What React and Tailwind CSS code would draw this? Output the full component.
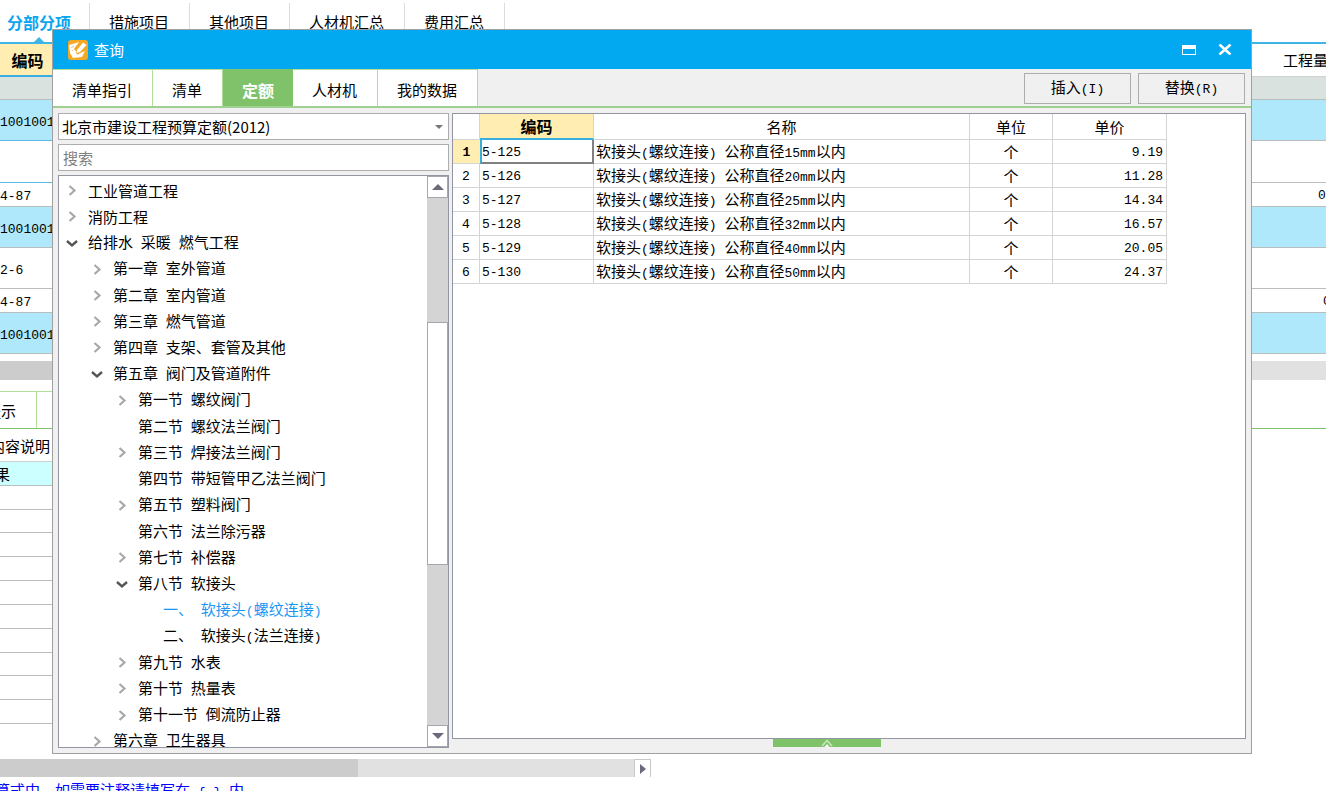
import { useState } from 'react';

const projectTabs = ['分部分项', '措施项目', '其他项目', '人材机汇总', '费用汇总'];
const queryTabs = ['清单指引', '清单', '定额', '人材机', '我的数据'];

const backRows = [
  { h: 'h-[23px]', bg: 'bg-[#d9e2de]', line: 'border-[#b9bdbb]' },
  { h: 'h-[41px]', bg: 'bg-[#aee8fa]', line: 'border-[#5bbbe6]', code: '1001001' },
  { h: 'h-[42px]', bg: 'bg-white', line: 'border-[#5bbbe6]' },
  { h: 'h-[24px]', bg: 'bg-white', line: 'border-[#b9bdbb]', code: '4-87', amount: '0', pad: 'pl-[66px]' },
  { h: 'h-[41px]', bg: 'bg-[#aee8fa]', line: 'border-[#b9bdbb]', code: '1001001' },
  { h: 'h-[41px]', bg: 'bg-white', line: 'border-[#b9bdbb]', code: '2-6' },
  { h: 'h-[24px]', bg: 'bg-white', line: 'border-[#b9bdbb]', code: '4-87', amount: '0', pad: 'pl-[71px]' },
  { h: 'h-[41px]', bg: 'bg-[#aee8fa]', line: 'border-[#b9bdbb]', code: '1001001' },
];

const tree = [
  { level: 0, text: '工业管道工程', state: 'closed' },
  { level: 0, text: '消防工程', state: 'closed' },
  { level: 0, text: '给排水 采暖 燃气工程', state: 'open' },
  { level: 1, text: '第一章 室外管道', state: 'closed' },
  { level: 1, text: '第二章 室内管道', state: 'closed' },
  { level: 1, text: '第三章 燃气管道', state: 'closed' },
  { level: 1, text: '第四章 支架、套管及其他', state: 'closed' },
  { level: 1, text: '第五章 阀门及管道附件', state: 'open' },
  { level: 2, text: '第一节 螺纹阀门', state: 'closed' },
  { level: 2, text: '第二节 螺纹法兰阀门' },
  { level: 2, text: '第三节 焊接法兰阀门', state: 'closed' },
  { level: 2, text: '第四节 带短管甲乙法兰阀门' },
  { level: 2, text: '第五节 塑料阀门', state: 'closed' },
  { level: 2, text: '第六节 法兰除污器' },
  { level: 2, text: '第七节 补偿器', state: 'closed' },
  { level: 2, text: '第八节 软接头', state: 'open' },
  { level: 3, text: '一、 软接头(螺纹连接)' },
  { level: 3, text: '二、 软接头(法兰连接)' },
  { level: 2, text: '第九节 水表', state: 'closed' },
  { level: 2, text: '第十节 热量表', state: 'closed' },
  { level: 2, text: '第十一节 倒流防止器', state: 'closed' },
  { level: 1, text: '第六章 卫生器具', state: 'closed' },
];

const indents = ['pl-[7px]', 'pl-8', 'pl-[57px]', 'pl-[82px]'];

const quotas = [
  { code: '5-125', size: 15, price: '9.19' },
  { code: '5-126', size: 20, price: '11.28' },
  { code: '5-127', size: 25, price: '14.34' },
  { code: '5-128', size: 32, price: '16.57' },
  { code: '5-129', size: 40, price: '20.05' },
  { code: '5-130', size: 50, price: '24.37' },
];

// Latin runs are set half as wide as the Chinese characters around them
function Mixed({ children }) {
  return String(children)
    .split(/([\x20-\x7e]+)/)
    .map((part, i) =>
      i % 2 ? (
        <span key={i} className="font-['Liberation_Mono',monospace] text-[13px] whitespace-pre">
          {part}
        </span>
      ) : (
        part
      )
    );
}

function Logo() {
  return (
    <svg width="20" height="20" viewBox="0 0 20 20" aria-hidden="true">
      <rect width="20" height="20" rx="3" fill="#f7a823" />
      <path d="M1 5 L11 2 L6 9 L10 14 L17 11 L14 17 L5 18 L2 13 Z" fill="#fff" />
      <path d="M7 9 L13 3 M8 12 L10 14 L18 5" stroke="#f7a823" strokeWidth="1.2" fill="none" />
      <path d="M9 10 L15 2.5 L18.5 5 L12 12 L8.5 13 Z" fill="#fff" />
      <path d="M3 8 L6 6 M4 11 L5 10" stroke="#f7c878" strokeWidth="1" />
    </svg>
  );
}

function Chevron({ open }) {
  return (
    <svg width="12" height="12" viewBox="0 0 12 12" fill="none" aria-hidden="true">
      {open ? (
        <path d="M1 3 L6 7.5 L11 3" stroke="#555" strokeWidth="2.4" />
      ) : (
        <path d="M3.5 1 L8.5 5.5 L3.5 10" stroke="#a8a8a8" strokeWidth="2.2" />
      )}
    </svg>
  );
}

function ProjectPage() {
  return (
    <div className="flex h-full flex-col">
      <nav className="flex h-[42px] shrink-0 items-start pt-[3px]">
        {projectTabs.map((tab, i) => (
          <button
            key={tab}
            className={
              i === 0
                ? 'relative h-[39px] w-[90px] border-r border-[#dcdcdc] pr-[11px] pb-[2px] text-base font-bold whitespace-nowrap text-[#0ba5ef]'
                : 'h-[39px] border-r border-[#dcdcdc] pr-5 pb-[2px] pl-[19px]'
            }
          >
            {tab}
            {i === 0 && (
              <svg className="absolute bottom-0 left-[34px]" width="10" height="5" viewBox="0 0 10 5" aria-hidden="true">
                <path d="M0 5 L5 0 L10 5 Z" fill="#3fb4e6" />
              </svg>
            )}
          </button>
        ))}
      </nav>

      <table className="w-full shrink-0 table-fixed border-separate border-spacing-0 border-t-2 border-[#3fb4e6]">
        <colgroup>
          <col className="w-[52px]" />
          <col />
          <col className="w-[74px]" />
        </colgroup>
        <thead>
          <tr className="h-[33px]">
            <th className="border-b-2 border-[#37aee0] bg-[#ffedb1] p-0 pl-[3px] text-base font-bold">编码</th>
            <td className="border-b border-[#d0d0d0]" />
            <th className="overflow-hidden border-b border-[#d0d0d0] p-0 pl-[31px] text-left font-normal whitespace-nowrap">
              工程量
            </th>
          </tr>
        </thead>
        <tbody className="leading-[18px]">
          {backRows.map((row, i) => (
            <tr key={i} className={`${row.h} ${row.bg}`}>
              <td className={`overflow-hidden border-b p-0 pt-[2px] whitespace-nowrap ${row.line}`}>
                {row.code && <Mixed>{row.code}</Mixed>}
              </td>
              <td className="border-b border-[#b9bdbb] p-0" />
              <td className={`overflow-hidden border-b border-[#b9bdbb] py-0 pr-0 ${row.pad || 'pl-0'}`}>
                {row.amount && <Mixed>{row.amount}</Mixed>}
              </td>
            </tr>
          ))}
        </tbody>
      </table>

      <div className="mt-[7px] flex h-[19px] shrink-0 bg-[#e1e1e1]">
        <div className="w-[358px] bg-[#ccc]" />
      </div>

      <div className="mt-[11px] flex h-[38px] shrink-0 border-b border-[#80c269]">
        <button className="flex w-[37px] items-center justify-end overflow-hidden border-t border-r border-[#aee09a] pt-[2px] pr-5 whitespace-nowrap">
          提示
        </button>
        <div className="w-4 border-t border-[#aee09a]" />
      </div>

      <div className="w-[53px] shrink-0">
        <div className="flex h-[33px] items-center justify-end overflow-hidden border-b border-[#d0d0d0] pt-[2px] pr-[3px] whitespace-nowrap">
          内容说明
        </div>
        <div className="grid h-[262px] auto-rows-fr">
          <div className="flex items-center justify-end overflow-hidden border-b border-[#b9bdbb] bg-[#ccffff] pt-[2px] pr-[43px] whitespace-nowrap">
            结果
          </div>
          {Array.from({ length: 10 }, (_, i) => (
            <div key={i} className="border-b border-[#b9bdbb]" />
          ))}
        </div>
      </div>

      <div className="mt-[35px] flex h-[18px] w-[651px] shrink-0 bg-[#e1e1e1]">
        <div className="w-[358px] bg-[#ccc]" />
        <button
          aria-label="向右滚动"
          className="ml-auto flex w-[17px] items-center justify-center border border-b-0 border-[#c8c8c8] bg-white"
        >
          <svg width="6" height="10" viewBox="0 0 6 10" aria-hidden="true">
            <path d="M0 0 L6 5 L0 10 Z" fill="#6a6a7c" />
          </svg>
        </button>
      </div>
      <p className="-ml-[5px] shrink-0 pt-[3px] whitespace-nowrap text-[#0000ff]">
        <Mixed>{'算式中，如需要注释请填写在 { } 内'}</Mixed>
      </p>
    </div>
  );
}

function TreePanel() {
  const [selected, setSelected] = useState(16);

  return (
    <div className="flex min-h-0 flex-1 border border-[#9296a3] bg-white">
      <div className="min-w-0 flex-1 overflow-hidden pt-[2px]">
        <ul className="grid h-[577px] auto-rows-fr">
          {tree.map((node, i) => (
            <li key={i} className={`flex items-center ${indents[node.level]}`}>
              <span className="flex w-[22px] shrink-0">
                {node.state && <Chevron open={node.state === 'open'} />}
              </span>
              <button
                onClick={() => setSelected(i)}
                className={i === selected ? 'whitespace-nowrap text-[#1a96f5]' : 'whitespace-nowrap'}
              >
                <Mixed>{node.text}</Mixed>
              </button>
            </li>
          ))}
        </ul>
      </div>
      <div className="flex w-[21px] shrink-0 flex-col bg-[#d4d4d4]">
        <button
          aria-label="向上滚动"
          className="flex h-[22px] items-center justify-center border border-[#a6a6ae] bg-white"
        >
          <svg width="12" height="6" viewBox="0 0 12 6" aria-hidden="true">
            <path d="M0 6 L6 0 L12 6 Z" fill="#6a6a7c" />
          </svg>
        </button>
        <div className="flex-[125]" />
        <div className="flex-[242] border border-[#a6a6ae] bg-white" />
        <div className="flex-[161]" />
        <button
          aria-label="向下滚动"
          className="flex h-[22px] items-center justify-center border border-[#a6a6ae] bg-white"
        >
          <svg width="12" height="6" viewBox="0 0 12 6" aria-hidden="true">
            <path d="M0 0 L6 6 L12 0 Z" fill="#6a6a7c" />
          </svg>
        </button>
      </div>
    </div>
  );
}

function QuotaTable() {
  return (
    <table className="w-[714px] table-fixed border-separate border-spacing-0 leading-[18px]">
      <colgroup>
        <col className="w-[27px]" />
        <col className="w-[114px]" />
        <col className="w-[376px]" />
        <col className="w-[83px]" />
        <col className="w-[114px]" />
      </colgroup>
      <thead>
        <tr className="h-[26px]">
          <td className="border-r border-b border-[#d4d4d4] p-0" />
          <th className="border-r border-b-2 border-r-[#d4d4d4] border-b-[#37aee0] bg-[#ffedb1] p-0 text-base leading-[18px] font-bold">
            编码
          </th>
          <th className="border-r border-b border-[#d4d4d4] p-0 font-normal">名称</th>
          <th className="border-r border-b border-[#d4d4d4] p-0 font-normal">单位</th>
          <th className="border-r border-b border-[#d4d4d4] p-0 font-normal">单价</th>
        </tr>
      </thead>
      <tbody>
        {quotas.map((q, i) => (
          <tr key={q.code} className="h-6">
            <th
              className={
                i === 0
                  ? 'border-b border-[#d4d4d4] bg-[#ffedb1] p-0 font-bold'
                  : 'border-r border-b border-[#d4d4d4] p-0 font-normal'
              }
            >
              <Mixed>{i + 1}</Mixed>
            </th>
            <td
              className={
                i === 0
                  ? 'border-r-2 border-b-2 border-l-2 border-r-[#808080] border-b-[#808080] border-l-[#37aee0] p-0'
                  : 'border-r border-b border-[#d4d4d4] p-0 pl-[2px]'
              }
            >
              <Mixed>{q.code}</Mixed>
            </td>
            <td className="border-r border-b border-[#d4d4d4] p-0 pt-[2px] pl-[2px] whitespace-nowrap">
              <Mixed>{`软接头(螺纹连接) 公称直径${q.size}mm以内`}</Mixed>
            </td>
            <td className="border-r border-b border-[#d4d4d4] p-0 text-center">个</td>
            <td className="border-r border-b border-[#d4d4d4] p-0 pr-[3px] text-right">
              <Mixed>{q.price}</Mixed>
            </td>
          </tr>
        ))}
      </tbody>
    </table>
  );
}

function QueryDialog() {
  const [tab, setTab] = useState('定额');

  return (
    <section
      role="dialog"
      aria-label="查询"
      className="absolute top-[29px] right-[74px] bottom-[37px] left-[52px] flex flex-col border border-[#a0a0a0] bg-[#f0f0f0]"
    >
      <header className="flex h-[39px] shrink-0 items-center bg-[#02a9f1] pr-[19px] pl-[15px] text-white">
        <Logo />
        <h1 className="ml-[6px]">查询</h1>
        <button aria-label="最大化" className="ml-auto">
          <svg width="14" height="10" viewBox="0 0 14 10" aria-hidden="true">
            <path d="M0 0 H14 V10 H0 Z M1 4 V9 H13 V4 Z" fill="#fff" fillRule="evenodd" />
          </svg>
        </button>
        <button aria-label="关闭" className="ml-[22px]">
          <svg width="14" height="11" viewBox="0 0 14 11" aria-hidden="true">
            <path d="M1.5 0.5 L12.5 10.5 M12.5 0.5 L1.5 10.5" stroke="#fff" strokeWidth="2.6" />
          </svg>
        </button>
      </header>

      <div className="flex h-[39px] shrink-0 border-b-2 border-[#9fd08f]">
        {queryTabs.map((name) => (
          <button
            key={name}
            onClick={() => setTab(name)}
            className={
              name === tab
                ? 'border-r border-[#80c269] bg-[#80c269] pt-1 pr-[18px] pl-[19px] text-base font-bold text-white'
                : 'border-t border-r border-[#aee09a] bg-white pt-1 pr-5 pl-[19px]'
            }
          >
            {name}
          </button>
        ))}
        <div className="ml-auto flex gap-[7px] pt-1 pr-[6px] pb-[2px]">
          <button className="w-[107px] border border-[#adadad]">
            <Mixed>插入(I)</Mixed>
          </button>
          <button className="w-[107px] border border-[#adadad]">
            <Mixed>替换(R)</Mixed>
          </button>
        </div>
      </div>

      <div className="flex min-h-0 flex-1 gap-[3px] px-[5px] pt-[5px]">
        <div className="mb-[5px] flex w-[391px] shrink-0 flex-col gap-1">
          <div className="relative shrink-0">
            <select
              aria-label="定额库"
              className="block h-[27px] w-full appearance-none border border-[#adadad] bg-white pl-[3px]"
            >
              <option>北京市建设工程预算定额(2012)</option>
            </select>
            <svg className="pointer-events-none absolute top-[12px] right-[6px]" width="8" height="4" viewBox="0 0 8 4" aria-hidden="true">
              <path d="M0 0 L4 4 L8 0 Z" fill="#76767f" />
            </svg>
          </div>
          <input
            type="text"
            aria-label="搜索"
            placeholder="搜索"
            className="h-[27px] w-full shrink-0 border border-[#adadad] bg-white pl-1 placeholder:text-[#808080]"
          />
          <TreePanel />
        </div>

        <div className="flex min-w-0 flex-1 flex-col">
          <div className="min-h-0 flex-1 overflow-hidden border border-[#9296a3] bg-white">
            <QuotaTable />
          </div>
          <div className="flex h-[14px] shrink-0 justify-center">
            <button aria-label="展开" className="mr-[44px] flex h-2 w-[108px] items-end justify-center bg-[#80c269]">
              <svg width="12" height="8" viewBox="0 0 12 8" aria-hidden="true">
                <path d="M1 7 L6 1.5 L11 7" stroke="#c5e5ba" strokeWidth="1.8" fill="none" />
                <path d="M3.5 8 L6 5 L8.5 8 Z" fill="#fff" />
              </svg>
            </button>
          </div>
        </div>
      </div>
    </section>
  );
}

export default function App() {
  return (
    <main className="relative h-screen overflow-hidden bg-white font-['Noto_Sans_CJK_SC',sans-serif] text-[15px] leading-5 text-black">
      <ProjectPage />
      <QueryDialog />
    </main>
  );
}
